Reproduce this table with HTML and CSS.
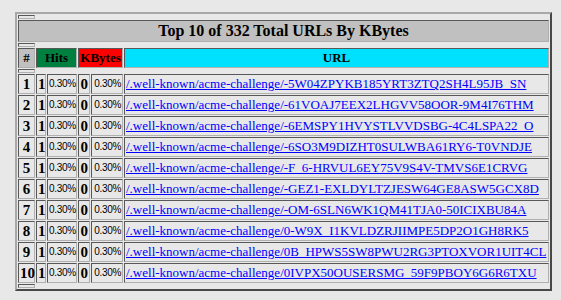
FILE: index.html
```html
<!DOCTYPE html>
<html>
<head>
<meta charset="utf-8">
<link rel="stylesheet" href="styles.css">
</head>
<body>
<table class="stats">
<colgroup>
<col class="c-num"><col class="c-hits"><col class="c-hpct"><col class="c-kb"><col class="c-kpct"><col class="c-url">
</colgroup>
<tr><th class="spacer"></th></tr>
<tr><th class="title" colspan="6">Top 10 of 332 Total URLs By KBytes</th></tr>
<tr><th class="spacer"></th></tr>
<tr class="head">
<th class="h-num">#</th>
<th class="h-hits" colspan="2">Hits</th>
<th class="h-kb" colspan="2">KBytes</th>
<th class="h-url">URL</th>
</tr>
<tr><th class="spacer"></th></tr>
<tr><td class="num">1</td><td class="val">1</td><td class="pct">0.30%</td><td class="val">0</td><td class="pct">0.30%</td><td class="url"><a href="#">/.well-known/acme-challenge/-5W04ZPYKB185YRT3ZTQ2SH4L95JB_SN</a></td></tr>
<tr><td class="num">2</td><td class="val">1</td><td class="pct">0.30%</td><td class="val">0</td><td class="pct">0.30%</td><td class="url"><a href="#">/.well-known/acme-challenge/-61VOAJ7EEX2LHGVV58OOR-9M4I76THM</a></td></tr>
<tr><td class="num">3</td><td class="val">1</td><td class="pct">0.30%</td><td class="val">0</td><td class="pct">0.30%</td><td class="url"><a href="#">/.well-known/acme-challenge/-6EMSPY1HVYSTLVVDSBG-4C4LSPA22_O</a></td></tr>
<tr><td class="num">4</td><td class="val">1</td><td class="pct">0.30%</td><td class="val">0</td><td class="pct">0.30%</td><td class="url"><a href="#">/.well-known/acme-challenge/-6SO3M9DIZHT0SULWBA61RY6-T0VNDJE</a></td></tr>
<tr><td class="num">5</td><td class="val">1</td><td class="pct">0.30%</td><td class="val">0</td><td class="pct">0.30%</td><td class="url"><a href="#">/.well-known/acme-challenge/-F_6-HRVUL6EY75V9S4V-TMVS6E1CRVG</a></td></tr>
<tr><td class="num">6</td><td class="val">1</td><td class="pct">0.30%</td><td class="val">0</td><td class="pct">0.30%</td><td class="url"><a href="#">/.well-known/acme-challenge/-GEZ1-EXLDYLTZJESW64GE8ASW5GCX8D</a></td></tr>
<tr><td class="num">7</td><td class="val">1</td><td class="pct">0.30%</td><td class="val">0</td><td class="pct">0.30%</td><td class="url"><a href="#">/.well-known/acme-challenge/-OM-6SLN6WK1QM41TJA0-50ICIXBU84A</a></td></tr>
<tr><td class="num">8</td><td class="val">1</td><td class="pct">0.30%</td><td class="val">0</td><td class="pct">0.30%</td><td class="url"><a href="#">/.well-known/acme-challenge/0-W9X_I1KVLDZRJIIMPE5DP2O1GH8RK5</a></td></tr>
<tr><td class="num">9</td><td class="val">1</td><td class="pct">0.30%</td><td class="val">0</td><td class="pct">0.30%</td><td class="url"><a href="#">/.well-known/acme-challenge/0B_HPWS5SW8PWU2RG3PTOXVOR1UIT4CL</a></td></tr>
<tr><td class="num">10</td><td class="val">1</td><td class="pct">0.30%</td><td class="val">0</td><td class="pct">0.30%</td><td class="url"><a href="#">/.well-known/acme-challenge/0IVPX50OUSERSMG_59F9PBOY6G6R6TXU</a></td></tr>
<tr><th class="spacer"></th></tr>
</table>
</body>
</html>
```

FILE: styles.css
```css
html, body {
  margin: 0;
  background: #e8e8e8;
}
body {
  padding: 12px 0 0 15px;
  font-family: "Liberation Serif", "Times New Roman", serif;
  color: #000;
}
.stats {
  table-layout: fixed;
  width: 537px;
  border-collapse: separate;
  border-spacing: 1px;
  border: 2px solid;
  border-color: #a8a8a8 #484848 #484848 #a8a8a8;
}
.c-num { width: 17px; }
.c-hits { width: 10px; }
.c-hpct { width: 30px; }
.c-kb { width: 12px; }
.c-kpct { width: 32px; }
.c-url { width: 425px; }
.stats th, .stats td {
  border: 1px solid;
  border-color: #585858 #b0b0b0 #b0b0b0 #585858;
  padding: 0 1px;
  white-space: nowrap;
  overflow: visible;
}
.stats th.spacer {
  box-sizing: border-box;
  height: 4px;
  padding: 0;
  font-size: 0;
  line-height: 0;
}
.title {
  background: #c0c0c0;
  font-size: 16px;
  font-weight: bold;
  line-height: 20px;
  text-align: center;
}
.head th {
  font-size: 13px;
  font-weight: bold;
  line-height: 18px;
  text-align: center;
}
.h-num { background: #c0c0c0; }
.h-hits { background: #008040; }
.h-kb { background: #ff0000; }
.h-url { background: #00e0ff; }
.stats td {
  line-height: 18px;
  vertical-align: middle;
}
.num {
  text-align: center;
  font-size: 15px;
  font-weight: bold;
}
.val {
  text-align: right;
  font-size: 15px;
  font-weight: bold;
}
.pct {
  text-align: right;
  font-family: "Liberation Sans", Arial, sans-serif;
  font-size: 10px;
  letter-spacing: -0.3px;
}
.url {
  text-align: left;
  font-size: 13px;
}
.url a {
  color: #0000ff;
  text-decoration: underline;
}
```
